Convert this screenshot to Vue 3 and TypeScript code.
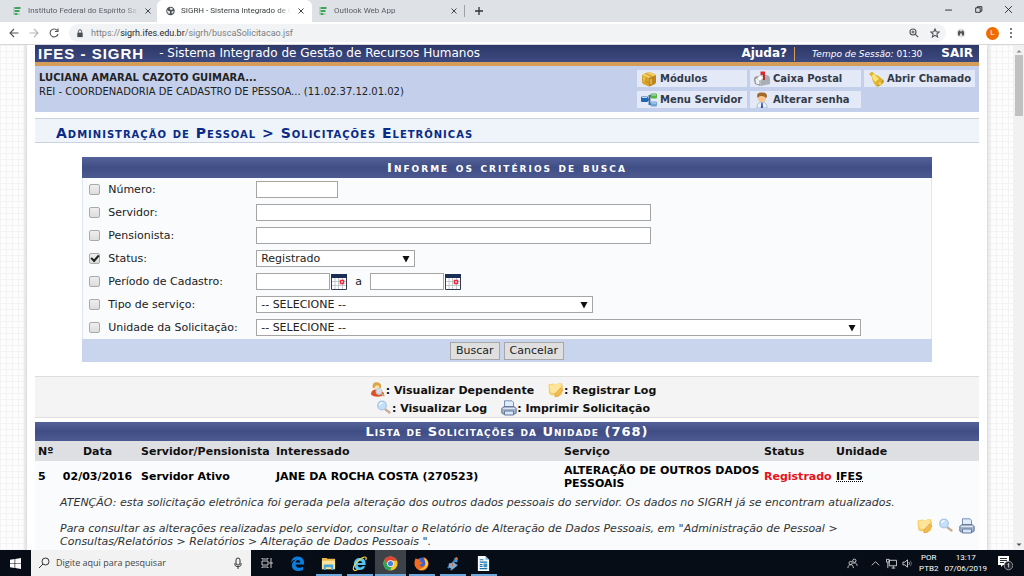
<script setup lang="ts">
import { reactive, ref } from 'vue'

interface Tab { title: string; icon: string; active: boolean }
const tabs: Tab[] = [
  { title: 'Instituto Federal do Espírito Sant', icon: 'ifes', active: false },
  { title: 'SIGRH - Sistema Integrado de Ge', icon: 'globe', active: true },
  { title: 'Outlook Web App', icon: 'ifes', active: false },
]

const shortcuts = [
  { label: 'Módulos', icon: 'box' },
  { label: 'Caixa Postal', icon: 'mail' },
  { label: 'Abrir Chamado', icon: 'bell' },
  { label: 'Menu Servidor', icon: 'tree' },
  { label: 'Alterar senha', icon: 'person' },
]

type Kind = 'text' | 'select' | 'period'
interface Criterion { id: string; label: string; kind: Kind; size: string; option?: string }
const criteria: Criterion[] = [
  { id: 'numero', label: 'Número:', kind: 'text', size: 'w-number' },
  { id: 'servidor', label: 'Servidor:', kind: 'text', size: 'w-name' },
  { id: 'pensionista', label: 'Pensionista:', kind: 'text', size: 'w-name' },
  { id: 'status', label: 'Status:', kind: 'select', size: 'w-status', option: 'Registrado' },
  { id: 'periodo', label: 'Período de Cadastro:', kind: 'period', size: 'w-date' },
  { id: 'tipo', label: 'Tipo de serviço:', kind: 'select', size: 'w-type', option: '-- SELECIONE --' },
  { id: 'unidade', label: 'Unidade da Solicitação:', kind: 'select', size: 'w-unit', option: '-- SELECIONE --' },
]
const enabled = reactive<Record<string, boolean>>({ status: true })
const values = reactive<Record<string, string>>({})
const address = ref('https://sigrh.ifes.edu.br/sigrh/buscaSolicitacao.jsf')

const legend = [
  [{ icon: 'dependent', label: 'Visualizar Dependente' }, { icon: 'note', label: 'Registrar Log' }],
  [{ icon: 'lens', label: 'Visualizar Log' }, { icon: 'printer', label: 'Imprimir Solicitação' }],
]
const actions = [
  { icon: 'note', label: 'Registrar Log' },
  { icon: 'lens', label: 'Visualizar Log' },
  { icon: 'printer', label: 'Imprimir Solicitação' },
]
const apps = [
  { icon: 'edge', label: 'Edge', state: '' },
  { icon: 'folder', label: 'Explorador', state: 'open' },
  { icon: 'ie', label: 'Internet Explorer', state: 'open' },
  { icon: 'chrome', label: 'Chrome', state: 'open current' },
  { icon: 'firefox', label: 'Firefox', state: 'open' },
  { icon: 'java', label: 'Java', state: 'open' },
  { icon: 'writer', label: 'Writer', state: 'open' },
]
</script>

<template>
  <div class="desktop">
    <svg class="sprite" aria-hidden="true">
      <symbol id="ifes" viewBox="0 0 8 10"><path fill="#3fa35b" d="M1 1h6v2H1zM1 4h5v2H1zM1 7h3v2H1z" /><path fill="#8cc79a" d="M0 1h1v8H0zM5 7h1v2H5z" /></symbol>
      <symbol id="globe" viewBox="0 0 10 10"><circle cx="5" cy="5" r="4.700" fill="#4d5156" /><path d="M1.500 3.600 3 5l1.400.2L4.500 7l-1 1.200C2 7.500 1 6 1.500 3.600zM5 1.200l3 1.400L6.500 4 5 3.500 4 2.500zM6 5.500l2.600-.5-.6 2-1.500 1z" fill="#e8eaed" /></symbol>
      <symbol id="box" viewBox="0 0 16 16"><path d="M1 4.500Q1 3 8 1q7 2 7 3.500v7Q15 13 8 15.500 1 13 1 11.500z" fill="#d9a32a" /><path d="M1 4.300Q2 3 8 1q6 2 7 3.300L8 7z" fill="#f0cc62" /><path d="M8 7v8.500q7-2.500 7-4V4.300z" fill="#bd861d" /><path d="M1 8.500 8 12l7-3.500M4.500 2.500l7 3.200" fill="none" stroke="#b8861f" stroke-width=".8" /><path d="M3 5.500v5M10 8v5" stroke="#f5dc85" /></symbol>
      <symbol id="mail" viewBox="0 0 16 16"><path d="M0 8.500C0 4.500 5 4.500 6.500 7v8L1 13z" fill="#8f8f92" /><path d="M4 4.500 12 4c3 0 4 2 4 4v5l-9 2V8c0-2-1-3-3-3.500z" fill="#a9adb4" /><path d="M1.500 8.500c1-2 3-2 4 0v5l-3.500-1z" fill="#eef3f6" /><path d="M3 7.500 6 4l3.500 2.500L6 10z" fill="#fff" stroke="#b5bbc1" stroke-width=".6" /><path d="M10 9V1" stroke="#b81c1c" stroke-width="1.800" /><path d="M6.500.5H11V4H6.500z" fill="#d92b2b" /></symbol>
      <symbol id="bell" viewBox="0 0 16 16"><path d="M1 3 4 .5l3 3c4 1 5 3 8 5l-7 6.500C6 12 4 10 4 6z" fill="#e0b42a" /><path d="m4 4 2-1 5 5-4 3C5.500 9 4 7 4 4z" fill="#f9e478" /><path d="m8 15 7-6.500c2 2 0 4-2 5.500s-4 2-5 1z" fill="#c99a20" /><circle cx="12" cy="12.500" r="1.500" fill="#f6d350" /></symbol>
      <symbol id="tree" viewBox="0 0 16 16"><path d="M5 7.500h3M11 4H8.500v8H11" fill="none" stroke="#35679c" stroke-width="1.800" /><rect y="4.500" width="7" height="5.500" rx="1" fill="#1f67b5" /><rect x="9.500" y="1.500" width="6.500" height="5" rx="1" fill="#57b544" /><rect x="9.500" y="9.500" width="6.500" height="5" rx="1" fill="#6ea4d4" /><path d="M1 5.500h5M10.500 3h4.500M10.500 11h4.500" stroke="#b9dcf5" /></symbol>
      <symbol id="person" viewBox="0 0 16 16"><path d="M3 16c0-4 2-6 5-6s5 2 5 6z" fill="#eef2fa" stroke="#8d9dbb" stroke-width=".7" /><circle cx="8" cy="6" r="4.200" fill="#f6c48c" /><path d="M3.500 6C2 1 5 0 8 .5c4-.5 6 2 4.500 5.500C11 5 9 3.500 7 4 5 4 4.500 5 3.500 6z" fill="#a06a2c" /><path d="m7.300 11 .7-1 .7 1 .5 5H6.800z" fill="#345fb1" /></symbol>
      <symbol id="calendar" viewBox="0 0 16 16"><path d="M.5.5h15v15H.5z" fill="#fff" stroke="#333b55" /><path d="M0 0h16v4H0z" fill="#1b2f55" /><path d="M4 4v11M7.500 4v11M11.500 4v11M1 7.500h14M1 11.500h14" stroke="#b7bcc5" stroke-width=".8" /><path d="M9.500 6.500h3v3h-3z" fill="#fff" stroke="#f12b3e" stroke-width="1.500" /></symbol>
      <symbol id="dependent" viewBox="0 0 16 16"><path d="M1 12.500C1 9 3 7.500 6 7.500s8 1.500 8 5c-3 3-10 3-13 0z" fill="#dd5226" /><circle cx="7" cy="4.500" r="3.200" fill="#fbe0b0" /><path d="M2.800 6C2 1 4.500 0 7.200.2s4.600 2 3.800 5.800L9.500 6C9.500 2.500 5 2 4.500 6z" fill="#dba64a" /><path d="m11.500 12 3 2" stroke="#c9a98c" stroke-width="1.600" /><circle cx="9" cy="9.500" r="3" fill="#dbeaf7" fill-opacity=".9" stroke="#b5c8dc" /></symbol>
      <symbol id="note" viewBox="0 0 16 16"><path d="m.5 2.500 5-1 .8.800L13.500 1l1.500 3.500-1 8L10 15l-3-1.500-4.500-.5L1 11z" fill="#f5cd68" /><path d="m1.500 3 11.500-1.500L12.500 9l-5 2-5-.5z" fill="#ffe49a" /><path d="m7 12 5.500-6L15 8l-5 6-3 1z" fill="#f5bd50" stroke="#cf9440" stroke-width=".6" /></symbol>
      <symbol id="lens" viewBox="0 0 16 16"><path d="m9.500 9.500 4 3" stroke="#c9ad92" stroke-width="2.200" stroke-linecap="round" /><circle cx="6" cy="5.500" r="4.300" fill="#c3e0fa" stroke="#a9c5e3" stroke-width="1.200" /><path d="M3.500 5c.3-1.500 1.500-2.300 3-2" fill="none" stroke="#fff" stroke-width="1.300" /></symbol>
      <symbol id="printer" viewBox="0 0 16 16"><path d="M3.500 7V.8h7.500l1.500 1.500V7z" fill="#e1edfb" stroke="#7790b2" /><path d="m.8 8.500 2-2h10.400l2 2V13l-1 1H1.800l-1-1z" fill="#a3b3c9" stroke="#66799a" /><path d="M2 8.500h12" stroke="#dbe5f1" /><path d="M3.500 11h9v4h-9z" fill="#d4e6fb" stroke="#66799a" /></symbol>
      <symbol id="edge" viewBox="0 0 16 16"><path d="M1 7C2 2 5 .5 8.500.5 13 .5 15 4 15 7v2H6c0 4 5 4.500 8 2.500V15C9 17 2 16 2 10c0-3 2-5 4-6-3 0-4 2-5 3zm5 0h5c0-4-5-3.500-5 0z" fill="#0b7dda" /></symbol>
      <symbol id="folder" viewBox="0 0 16 16"><path d="M1 2h5l1 1h8v11H1z" fill="#e9b84b" /><path d="M1 5h14v9H1z" fill="#fbe397" /><path d="M3 9h10v6h-2v-3H5v3H3z" fill="#43a5dc" /></symbol>
      <symbol id="ie" viewBox="0 0 16 16"><path d="M2 9c0-5 3-7 6.500-7C13 2 15 5 14.500 9.500H6c.500 3 4 3.500 5 1.500h3c-1 3-3 4-6 4-4 0-6-3-6-6zm4-1.500h5c-.500-3-4.500-3-5 0z" fill="#55c4f1" /><path d="M2 15C-.5 12 6 4 12 1.500c3-1.200 4 .5 2.500 3M2 15c1 .8 3 0 4-1" fill="none" stroke="#f2cd45" stroke-width="1.300" /></symbol>
      <symbol id="chrome" viewBox="0 0 16 16"><circle cx="8" cy="8" r="7.500" fill="#f9c72e" /><path d="M1.500 4.200A7.500 7.500 0 0 1 14.800 5H8L5 9.500z" fill="#df4434" /><path d="M1.500 4.200 5 10l4.500 1.200L7.500 15.500A7.500 7.500 0 0 1 1.500 4.200z" fill="#2ca45a" /><circle cx="8" cy="8" r="3.600" fill="#fff" /><circle cx="8" cy="8" r="2.800" fill="#477fdc" /></symbol>
      <symbol id="firefox" viewBox="0 0 16 16"><circle cx="8.500" cy="7.500" r="6" fill="#3c62cf" /><path d="M2 2c1 2 3 1 5 2L6 6l3 1c-1 3-3 2-3 3 2 3 7 0 6-4-.5-2-2-3-2-5 3 1 6 4 5.500 8C15 13 12 15.500 8 15.500S.5 12 .5 8C.5 5 1 4 2 2z" fill="#f36b21" /><path d="M11 2c4 2 5 6 3 9-2 4-6 4-9 3 5 0 8-3 7-7 0-2-1-3-1-5z" fill="#ffce36" /></symbol>
      <symbol id="java" viewBox="0 0 16 16"><path d="m3 13 9-10M6 15l7-6" stroke="#3d80b9" stroke-width="2" /><path d="m4 8 6-1 3 3-5 4-4-2z" fill="#87acd0" /><path d="M10 2h4l-1 5-3-1z" fill="#4e91c7" /><path d="M12 1v3M8 8v3" stroke="#d66c3d" stroke-width="1.500" /></symbol>
      <symbol id="writer" viewBox="0 0 16 16"><path d="M2 0h8l4 4v12H2z" fill="#f8fcff" /><path d="M10 0v4h4z" fill="#79b8dc" /><path d="M4 4h4M4 6.500h8M4 9h3M4 11h3M4 13.500h8" stroke="#1772a8" stroke-width="1.200" /><path d="M8 8h4v4H8z" fill="#3a91c7" /></symbol>
    </svg>

    <header class="tabstrip">
      <div v-for="tab in tabs" :key="tab.title" class="tab" :class="{ active: tab.active }">
        <svg class="favicon"><use :href="'#' + tab.icon" /></svg>
        <span class="tab-title">{{ tab.title }}</span>
        <button class="plain" aria-label="Fechar guia"><svg class="cross" viewBox="0 0 8 8"><path d="m1.500 1.500 5 5m0-5-5 5" /></svg></button>
      </div>
      <button class="plain new-tab" aria-label="Nova guia"><svg class="plus" viewBox="0 0 10 10"><path d="M5 1v8M1 5h8" /></svg></button>
      <div class="window-controls">
        <button class="plain" aria-label="Minimizar"><svg viewBox="0 0 8 8"><path d="M1 4.500h6" /></svg></button>
        <button class="plain" aria-label="Restaurar"><svg viewBox="0 0 8 8"><path d="M1.500 2.500h4v4h-4zM3 2.500v-1h4v4H5.500" /></svg></button>
        <button class="plain" aria-label="Fechar"><svg viewBox="0 0 8 8"><path d="m1 1 6 6m0-6L1 7" /></svg></button>
      </div>
    </header>

    <nav class="toolbar" aria-label="Navegador">
      <button class="plain" aria-label="Voltar"><svg class="nav" viewBox="0 0 10 10"><path d="M9.500 5H1m4-4L1 5l4 4" /></svg></button>
      <button class="plain" aria-label="Avançar"><svg class="nav muted" viewBox="0 0 10 10"><path d="M.5 5H9M5 1l4 4-4 4" /></svg></button>
      <button class="plain" aria-label="Recarregar"><svg class="nav" viewBox="0 0 10 10"><path d="M8.300 2.500A4 4 0 1 0 9 6M9 .5v3H6" /></svg></button>
      <div class="omnibox">
        <svg class="lock" viewBox="0 0 8 10"><path d="M1 4h6v5H1z" fill="#4a4d51" /><path d="M2.300 4V2.500a1.700 1.700 0 0 1 3.400 0V4" fill="none" stroke="#4a4d51" /></svg>
        <a class="url" :href="address"><span>https://</span><b>sigrh.ifes.edu.br</b><span>/sigrh/buscaSolicitacao.jsf</span></a>
        <svg class="nav" viewBox="0 0 10 10"><circle cx="4" cy="4" r="3" /><path d="m6.200 6.200 3 3M2.500 4h3M4 2.500v3" /></svg>
        <svg class="nav star" viewBox="0 0 10 10"><path d="m5 1 1.200 2.700 3 .3-2.300 2 .7 3L5 7.400 2.400 9l.7-3L.8 4l3-.3z" /></svg>
      </div>
      <svg class="extension" viewBox="0 0 10 10"><circle cx="5" cy="5" r="4.500" fill="#e1e3e5" /><path d="M2 7.500V4l1-1.500h1L5 4l1-1.500h1L8 4v3.500H6V5.500H4v2z" fill="#515459" /></svg>
      <span class="avatar">L</span>
      <button class="plain" aria-label="Menu"><svg class="dots" viewBox="0 0 4 12"><circle cx="2" cy="2" r="1" /><circle cx="2" cy="6" r="1" /><circle cx="2" cy="10" r="1" /></svg></button>
    </nav>

    <div class="viewport">
      <main class="page">
        <header class="banner">
          <strong class="brand">IFES - SIGRH</strong>
          <span class="system">- Sistema Integrado de Gestão de Recursos Humanos</span>
          <a href="#ajuda" class="help">Ajuda?</a>
          <span class="session"><em>Tempo de Sessão:</em> 01:30</span>
          <a href="#sair" class="leave">SAIR</a>
        </header>

        <section class="user-panel">
          <div class="user">
            <strong>LUCIANA AMARAL CAZOTO GUIMARA...</strong>
            <span>REI - COORDENADORIA DE CADASTRO DE PESSOA... (11.02.37.12.01.02)</span>
          </div>
          <nav class="shortcuts" aria-label="Atalhos">
            <a v-for="item in shortcuts" :key="item.label" href="#atalho"><svg class="icon"><use :href="'#' + item.icon" /></svg>{{ item.label }}</a>
          </nav>
        </section>

        <h1>Administração de Pessoal &gt; Solicitações Eletrônicas</h1>

        <form class="search" @submit.prevent>
          <h2>Informe os critérios de busca</h2>
          <div class="criteria">
            <div v-for="c in criteria" :key="c.id" class="criterion">
              <input :id="'use-' + c.id" v-model="enabled[c.id]" type="checkbox" class="tick" :aria-label="'Filtrar por ' + c.label" />
              <label :for="c.id">{{ c.label }}</label>
              <input v-if="c.kind === 'text'" :id="c.id" v-model="values[c.id]" type="text" class="field" :class="c.size" />
              <span v-else-if="c.kind === 'select'" class="picker" :class="c.size">
                <select :id="c.id"><option>{{ c.option }}</option></select>
                <svg class="arrow" viewBox="0 0 8 8"><path d="M.5 1h7L4 7.500z" /></svg>
              </span>
              <span v-else class="period">
                <input :id="c.id" type="text" class="field" :class="c.size" />
                <button type="button" class="plain" aria-label="Data inicial"><svg class="icon"><use href="#calendar" /></svg></button>
                <label for="periodo-fim" class="until">a</label>
                <input id="periodo-fim" type="text" class="field" :class="c.size" />
                <button type="button" class="plain" aria-label="Data final"><svg class="icon"><use href="#calendar" /></svg></button>
              </span>
            </div>
          </div>
          <footer>
            <button type="submit" class="action">Buscar</button>
            <button type="button" class="action">Cancelar</button>
          </footer>
        </form>

        <section class="legend">
          <div v-for="(row, i) in legend" :key="i" class="legend-row">
            <span v-for="item in row" :key="item.label"><svg class="icon"><use :href="'#' + item.icon" /></svg>: {{ item.label }}</span>
          </div>
        </section>

        <table class="list">
          <caption>Lista de Solicitações da Unidade (768)</caption>
          <colgroup>
            <col class="c-num" /><col class="c-date" /><col class="c-type" /><col class="c-who" /><col class="c-service" /><col class="c-status" /><col class="c-unit" /><col class="c-actions" />
          </colgroup>
          <thead>
            <tr><th>Nº</th><th class="center">Data</th><th>Servidor/Pensionista</th><th>Interessado</th><th>Serviço</th><th>Status</th><th>Unidade</th><th></th></tr>
          </thead>
          <tbody>
            <tr class="request">
              <td>5</td><td class="center">02/03/2016</td><td>Servidor Ativo</td><td>JANE DA ROCHA COSTA (270523)</td><td>ALTERAÇÃO DE OUTROS DADOS PESSOAIS</td><td class="registered">Registrado</td><td><abbr title="Instituto Federal do Espírito Santo">IFES</abbr></td><td></td>
            </tr>
            <tr class="detail">
              <td></td>
              <td colspan="6">
                <p>ATENÇÃO: esta solicitação eletrônica foi gerada pela alteração dos outros dados pessoais do servidor. Os dados no SIGRH já se encontram atualizados.</p>
                <p>Para consultar as alterações realizadas pelo servidor, consultar o Relatório de Alteração de Dados Pessoais, em "Administração de Pessoal &gt; Consultas/Relatórios &gt; Relatórios &gt; Alteração de Dados Pessoais ".</p>
              </td>
              <td class="tools">
                <div class="row-actions">
                  <button v-for="a in actions" :key="a.icon" class="plain" :aria-label="a.label"><svg class="icon"><use :href="'#' + a.icon" /></svg></button>
                </div>
              </td>
            </tr>
          </tbody>
        </table>
      </main>
      <div class="scrollbar" aria-hidden="true">
        <svg viewBox="0 0 8 8"><path d="M1.500 5.500 4 3l2.500 2.500z" fill="#8b8b8b" /></svg>
        <span class="thumb"></span>
        <svg viewBox="0 0 8 8"><path d="M1.500 2.500 4 5l2.500-2.500z" fill="#505050" /></svg>
      </div>
    </div>

    <footer class="taskbar">
      <button class="plain start" aria-label="Iniciar"><svg viewBox="0 0 12 12"><path d="m0 2 5-.8v4.500H0zM5.700 1.100 12 0v5.700H5.700zM0 6.400h5v4.500L0 10.200zM5.700 6.400H12V12l-6.300-1z" fill="#fff" /></svg></button>
      <div class="task-search">
        <svg viewBox="0 0 12 12"><circle cx="7.500" cy="4.500" r="3.500" /><path d="M5 7 1 11" /></svg>
        <input type="text" placeholder="Digite aqui para pesquisar" aria-label="Pesquisar" />
        <svg viewBox="0 0 12 12"><rect x="4" y="1" width="4" height="7" rx="2" /><path d="M3 6v2c0 2 6 2 6 0V6M6 9.500V12" /></svg>
      </div>
      <button class="plain task-view" aria-label="Visão de tarefas"><svg viewBox="0 0 12 12"><path d="M1 4h6v4H1zM1 2V1m6 1V1M1 2h6M1 11v-1h6v1M10 1v3M10 8v3M9 5h2v2H9z" /></svg></button>
      <button v-for="app in apps" :key="app.icon" class="plain app" :class="app.state" :aria-label="app.label"><svg><use :href="'#' + app.icon" /></svg></button>
      <div class="tray">
        <svg class="people" viewBox="0 0 12 12"><circle cx="4" cy="5.500" r="1.800" /><path d="M1 11c0-5 6-5 6 0" /><circle cx="8" cy="3" r="1.800" /><path d="M7 6c2-1.500 4 0 4 2.500" /></svg>
        <svg viewBox="0 0 12 12"><path d="m2 8 4-4 4 4" /></svg>
        <svg viewBox="0 0 12 12"><path d="M3.500 2.500h8v6h-8zM6 11h4M8 9v2M.5 1.500h3v3h-3zM2 5v6" /></svg>
        <svg viewBox="0 0 12 12"><path d="M1 4.500h2l3-2.500v8L3 7.500H1zM7.500 4.500q1.500 1.500 0 3" /><path class="faint" d="M9 3q3 3 0 6" /></svg>
        <span class="lang"><span>POR</span><span>PTB2</span></span>
        <span class="clock"><span>13:17</span><span>07/06/2019</span></span>
        <svg class="notice" viewBox="0 0 16 16"><path d="M1 1h11v9H6l-2 2v-2H1z" fill="#fff" stroke="none" /><path d="M3 3.500h7M3 5.500h7M3 7.500h4" stroke="#111a20" /><circle cx="11.500" cy="10.500" r="4.300" fill="#20262c" stroke="#a9adb0" stroke-width=".8" /><path d="m10.500 9.500 1.200-1v4" /></svg>
      </div>
    </footer>
  </div>
</template>

<style>
html, body, #app { height: 100%; }
body { margin: 0; overflow: hidden; }
</style>

<style scoped>
* { box-sizing: border-box; }
.desktop { height: 100%; display: flex; flex-direction: column; font: 11px/13px Verdana, "DejaVu Sans", sans-serif; color: #222; background: #fff; }
.sprite { position: absolute; width: 0; height: 0; }
svg { display: block; flex: none; }
.icon { width: 16px; height: 16px; }
.plain { display: flex; align-items: center; justify-content: center; padding: 0; border: 0; background: none; }
input, select, button { font: inherit; color: inherit; }
a { color: inherit; text-decoration: none; }

.tabstrip { flex: none; height: 22px; display: flex; align-items: center; background: #dee1e6; font: 8px/10px Roboto, sans-serif; color: #5c6066; }
.tab { width: 153px; height: 22px; display: flex; align-items: center; gap: 6px; padding: 0 1px 0 13px; }
.tab.active { width: 155px; margin-left: 4px; padding: 0 7px 0 9px; background: #fff; border-radius: 6px 6px 0 0; color: #3c4043; }
.tab:nth-child(3) { padding: 0 6px 0 7px; border-right: 1px solid #9fa3a8; height: 12px; }
.tab-title { flex: 1; overflow: hidden; white-space: nowrap; mask-image: linear-gradient(90deg, #000 88%, transparent); }
.favicon { width: 9px; height: 10px; }
.cross { width: 8px; height: 8px; stroke: #44474b; fill: none; }
.plus { width: 10px; height: 10px; stroke: #333; stroke-width: 1.300; }
.new-tab { margin-left: 9px; }
.window-controls { margin-left: auto; display: flex; gap: 21px; padding: 0 11px 4px 0; }
.window-controls svg { width: 9px; height: 9px; fill: none; stroke: #222; stroke-width: .8; }

.toolbar { flex: none; height: 23px; display: flex; align-items: center; gap: 10px; padding: 0 11px 0 9px; border-bottom: 1px solid #d5d7da; background: #fff; font: 8px/12px Roboto, sans-serif; }
.nav { width: 10px; height: 10px; fill: none; stroke: #505358; stroke-width: 1.100; }
.muted { stroke: #b3b6ba; }
.omnibox { flex: 1; height: 18px; display: flex; align-items: center; padding: 0 6px 0 7px; border-radius: 9px; background: #f1f3f4; }
.lock { width: 8px; height: 9px; }
.url { flex: 1; margin-left: 7px; font-size: 9px; color: #7b7f84; }
.url b { font-weight: 400; color: #26282b; }
.star { margin-left: 11px; }
.extension { width: 10px; height: 10px; }
.avatar { width: 13px; height: 13px; margin-left: 10px; border-radius: 50%; background: #ef6c00; color: #fff; text-align: center; }
.dots { width: 4px; height: 12px; fill: #4d5054; }

.viewport { flex: 1; min-height: 0; display: flex; overflow: hidden; background-color: #fdfdfd; background-image: linear-gradient(#f3f3f3 1px, transparent 1px), linear-gradient(90deg, #f3f3f3 1px, transparent 1px); background-size: 6px 6px; }
.page { flex: 1; min-width: 0; align-self: flex-start; margin: 0 26px 0 27px; padding: 0 8px; background: #fff; box-shadow: 0 0 4px 1px #ccc; }
.scrollbar { width: 11px; display: flex; flex-direction: column; align-items: center; background: #f1f1f1; padding: 2px 0 1px; }
.scrollbar svg { width: 8px; height: 8px; }
.thumb { width: 8px; height: 61px; margin-bottom: auto; background: #c1c1c1; }

.banner { height: 21px; display: flex; align-items: center; padding: 0 6px 0 3px; background: linear-gradient(#2d3868, #3d4a80); border-bottom: 4px solid #d59d57; color: #fff; }
.brand { font: bold 15px/17px "Liberation Sans", Arial, sans-serif; letter-spacing: 1px; }
.system { margin-left: 15px; font-size: 12px; flex: 1; }
.help, .leave { font-size: 12px; font-weight: 700; }
.help { padding-right: 7px; }
.session { margin-right: 19px; padding-left: 17px; border-left: 1px solid #d59d57; font-size: 9px; line-height: 14px; }

.user-panel { min-height: 46px; display: flex; justify-content: space-between; padding: 4px; background: #c4d0eb; }
.user { display: flex; flex-direction: column; gap: 1px; padding-top: 1px; font-size: 10px; }
.shortcuts { display: grid; grid-template-columns: 110px 111px 111px; grid-template-rows: 17px 17px; gap: 4px 3px; font-size: 10px; font-weight: 700; color: #333a48; }
.shortcuts a { display: flex; align-items: center; gap: 3px; padding-left: 4px; background: #e3e9f7; white-space: nowrap; }

h1 { margin: 6px 0 14px; padding: 6px 21px 1px; border: solid #ccd2dd; border-width: 1px 0; background: #eff3fa; font: small-caps bold 14px/16px Verdana, "DejaVu Sans", sans-serif; letter-spacing: 1px; color: #092b86; }

.search { width: 90%; margin: 0 auto; border: solid #dfe5f2; border-width: 0 1px; background: #f9fbfd; }
h2, caption { margin: 0; background: linear-gradient(#55629a, #404e86 50%, #4d5a91); color: #fff; text-align: center; font: small-caps bold 13px/21px Verdana, "DejaVu Sans", sans-serif; letter-spacing: 1px; }
h2 { margin: 0 -1px; letter-spacing: 2px; }
.criterion { height: 23px; display: grid; grid-template-columns: 25px 148px 1fr; align-items: center; }
.tick { appearance: none; width: 11px; height: 11px; margin: 0 0 0 6px; border: 1px solid #aaa; border-radius: 2px; background: linear-gradient(#eee, #ddd); display: grid; place-items: center; }
.tick:checked::before { content: ""; width: 6px; height: 3px; margin-bottom: 2px; border: solid #222; border-width: 0 0 2px 2px; transform: rotate(-48deg); }
.field, .picker { height: 17px; border: 1px solid #a5a5a5; background: #fff; }
.field { padding: 0 3px; outline: none; }
.picker { display: flex; align-items: center; }
select { flex: 1; min-width: 0; height: 15px; appearance: none; border: 0; padding: 0 4px; background: none; color: #222; }
.arrow { width: 8px; height: 8px; margin-right: 4px; pointer-events: none; fill: #111; }
.w-number { width: 82px; }
.w-name { width: 395px; }
.w-status { width: 159px; }
.w-date { width: 74px; }
.w-type { width: 337px; }
.w-unit { width: 605px; }
.period { display: flex; align-items: center; gap: 1px; }
.until { margin: 0 7px; }
.search footer { height: 23px; display: flex; justify-content: center; align-items: center; gap: 4px; margin: 0 -1px; background: #c8d5ed; }
.action { height: 18px; padding: 0 5px; border: 1px solid #a8a8a8; background: #dfdfdf; line-height: 14px; }

.legend { margin: 14px 0 4px; padding: 4px 0 0 12px; border: solid #dedede; border-width: 1px 0; background: #f4f4f4; font-weight: 700; color: #111; }
.legend-row { height: 18px; display: flex; justify-content: center; gap: 14px; }
.legend span { display: flex; align-items: center; }

.list { width: 100%; table-layout: fixed; border-collapse: collapse; background: #f9fbfd; }
caption { line-height: 19px; }
th { height: 20px; padding: 0 0 0 3px; background: #dedfe3; text-align: left; color: #111; white-space: nowrap; }
td { padding: 2px 0 2px 3px; }
.center { padding-left: 0; text-align: center; }
.c-num { width: 22px; }
.c-date { width: 81px; }
.c-type { width: 135px; }
.c-who { width: 288px; }
.c-service { width: 200px; }
.c-status { width: 72px; }
.c-actions { width: 64px; }
.request td { height: 31px; font-weight: 700; color: #000; }
.request .registered { color: #e5141b; }
abbr { text-decoration: underline dotted; }
.detail td { padding: 4px 0 12px 3px; font-style: italic; color: #333; }
.detail .tools { padding: 0 0 0 2px; }
.detail p { margin: 0 0 13px; }
.detail p:last-child { margin: 0; }
.row-actions { display: flex; gap: 5px; }

.taskbar { flex: none; height: 26px; display: flex; align-items: stretch; background: #060d16; color: #fff; font: 9px/12px "Open Sans", sans-serif; }
.start { width: 31px; }
.start svg { width: 11px; height: 11px; }
.task-search { width: 220px; display: flex; align-items: center; padding: 0 7px; background: #f2f2f2; }
.task-search svg { width: 12px; height: 12px; fill: none; stroke: #333; }
.task-search input { flex: 1; min-width: 0; margin: 0 0 0 4px; padding: 0 2px; border: 0; background: none; outline: none; color: #444; }
.task-search input::placeholder { color: #444; opacity: 1; }
.task-view { width: 31px; }
.task-view svg { width: 12px; height: 12px; fill: none; stroke: #ddd; stroke-width: .9; }
.app { width: 31px; }
.app svg { width: 15px; height: 15px; }
.app.open { background: linear-gradient(#6ea9de, #6ea9de) bottom / 26px 2px no-repeat; }
.app.current { background: linear-gradient(#6ea9de, #6ea9de) bottom / 31px 2px no-repeat #3c4248; }
.tray { margin-left: auto; display: flex; align-items: center; gap: 5px; padding-right: 11px; font: 8px/11px Roboto, sans-serif; }
.tray svg { width: 11px; height: 11px; fill: none; stroke: #e8e8e8; stroke-width: .9; }
.tray .people { margin-right: 7px; }
.tray .faint { stroke: #777; }
.tray .notice { width: 16px; height: 16px; }
.lang, .clock { display: flex; flex-direction: column; align-items: center; }
.lang { margin-left: 1px; }
.clock { margin: 0 5px 0 1px; }
</style>
